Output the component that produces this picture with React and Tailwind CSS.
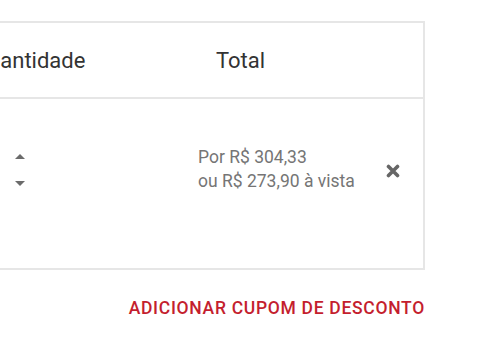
import React from "react";

export default function App() {
  return (
    <div className="w-[500px] h-[338px] bg-white overflow-hidden" style={{ fontFamily: "Roboto, 'Liberation Sans', sans-serif" }}>
      <div className="pt-[21px]">
        <div className="w-[525px] -ml-[100px] border-2 border-[#e6e6e6]">
          <div className="flex items-center h-[76px] border-b-2 border-[#e6e6e6] text-[22px] text-[#333333]">
            <div className="w-[314px] pl-[71px]">Quantidade</div>
            <div>Total</div>
          </div>
          <div className="flex items-start h-[169px] pt-[46px]">
            <div className="w-[113px]" />
            <div className="w-[10px] flex flex-col items-center pt-[9px] gap-[22px]">
              <svg width="10" height="5" viewBox="0 0 10 5"><path d="M0 5 L5 0 L10 5 Z" fill="#6b6b6b" /></svg>
              <svg width="10" height="5" viewBox="0 0 10 5"><path d="M0 0 L5 5 L10 0 Z" fill="#6b6b6b" /></svg>
            </div>
            <div className="ml-[173px] w-[188px] text-[17.5px] leading-[24px] text-[#757575]">
              <div>Por R$ 304,33</div>
              <div>ou R$ 273,90 à vista</div>
            </div>
            <div className="h-[48px] flex items-center pt-[3px]">
              <svg width="14" height="14" viewBox="0 0 14 14">
                <path d="M2.5 2.5 L11.5 11.5 M11.5 2.5 L2.5 11.5" stroke="#666666" strokeWidth="3.6" strokeLinecap="round" />
              </svg>
            </div>
          </div>
        </div>
        <div className="w-[425px] text-right mt-[28px] text-[17.5px] leading-[20px] font-medium tracking-[0.7px] text-[#c41e2e]">
          ADICIONAR CUPOM DE DESCONTO
        </div>
      </div>
    </div>
  );
}
